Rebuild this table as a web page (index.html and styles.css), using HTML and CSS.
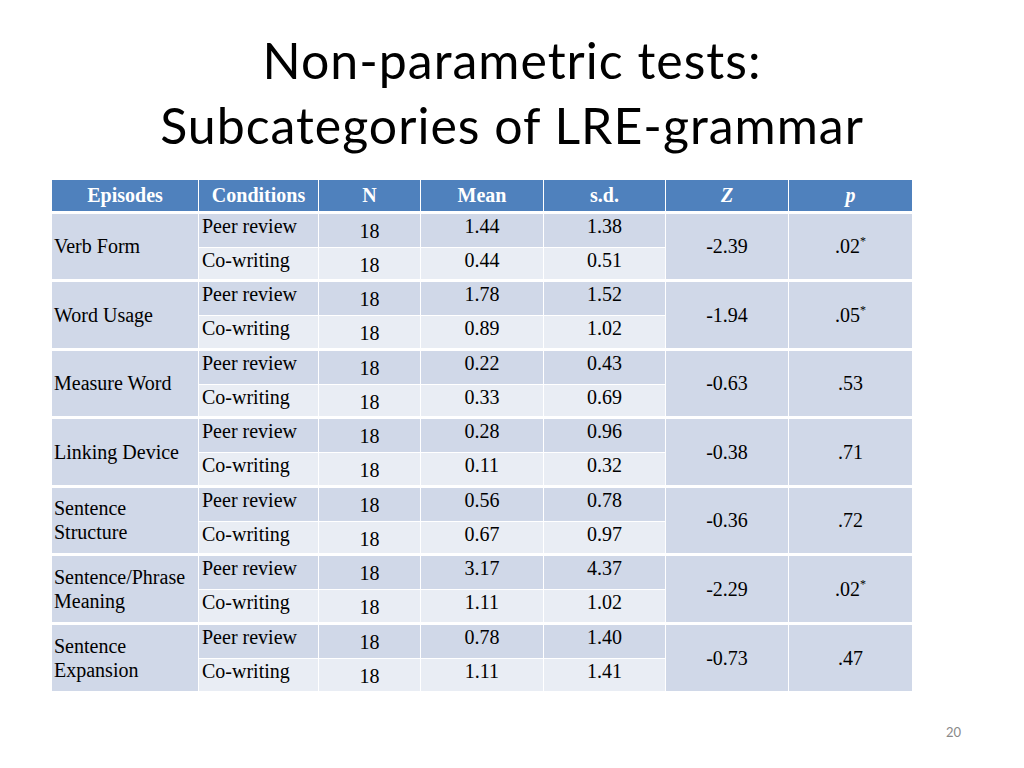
FILE: index.html
```html
<!DOCTYPE html>
<html>
<head>
<meta charset="utf-8">
<link rel="stylesheet" href="styles.css">
</head>
<body>
<div class="slide">
  <h1 class="title">Non-parametric tests:<br>Subcategories of LRE-grammar</h1>
  <table class="stats">
    <colgroup>
      <col class="c-ep"><col class="c-cond"><col class="c-n"><col class="c-mean"><col class="c-sd"><col class="c-z"><col class="c-p">
    </colgroup>
    <thead>
      <tr><th>Episodes</th><th>Conditions</th><th>N</th><th>Mean</th><th>s.d.</th><th><i>Z</i></th><th><i>p</i></th></tr>
    </thead>
    <tbody>
      <tr class="peer"><td class="ep" rowspan="2">Verb Form</td><td class="cond">Peer review</td><td class="n">18</td><td class="num">1.44</td><td class="num">1.38</td><td class="zp" rowspan="2">-2.39</td><td class="zp" rowspan="2">.02<sup>*</sup></td></tr>
      <tr class="co"><td class="cond">Co-writing</td><td class="n">18</td><td class="num">0.44</td><td class="num">0.51</td></tr>

      <tr class="peer"><td class="ep" rowspan="2">Word Usage</td><td class="cond">Peer review</td><td class="n">18</td><td class="num">1.78</td><td class="num">1.52</td><td class="zp" rowspan="2">-1.94</td><td class="zp" rowspan="2">.05<sup>*</sup></td></tr>
      <tr class="co"><td class="cond">Co-writing</td><td class="n">18</td><td class="num">0.89</td><td class="num">1.02</td></tr>

      <tr class="peer"><td class="ep" rowspan="2">Measure Word</td><td class="cond">Peer review</td><td class="n">18</td><td class="num">0.22</td><td class="num">0.43</td><td class="zp" rowspan="2">-0.63</td><td class="zp" rowspan="2">.53</td></tr>
      <tr class="co"><td class="cond">Co-writing</td><td class="n">18</td><td class="num">0.33</td><td class="num">0.69</td></tr>

      <tr class="peer"><td class="ep" rowspan="2">Linking Device</td><td class="cond">Peer review</td><td class="n">18</td><td class="num">0.28</td><td class="num">0.96</td><td class="zp" rowspan="2">-0.38</td><td class="zp" rowspan="2">.71</td></tr>
      <tr class="co"><td class="cond">Co-writing</td><td class="n">18</td><td class="num">0.11</td><td class="num">0.32</td></tr>

      <tr class="peer"><td class="ep" rowspan="2">Sentence<br>Structure</td><td class="cond">Peer review</td><td class="n">18</td><td class="num">0.56</td><td class="num">0.78</td><td class="zp" rowspan="2">-0.36</td><td class="zp" rowspan="2">.72</td></tr>
      <tr class="co"><td class="cond">Co-writing</td><td class="n">18</td><td class="num">0.67</td><td class="num">0.97</td></tr>

      <tr class="peer"><td class="ep" rowspan="2">Sentence/Phrase<br>Meaning</td><td class="cond">Peer review</td><td class="n">18</td><td class="num">3.17</td><td class="num">4.37</td><td class="zp" rowspan="2">-2.29</td><td class="zp" rowspan="2">.02<sup>*</sup></td></tr>
      <tr class="co"><td class="cond">Co-writing</td><td class="n">18</td><td class="num">1.11</td><td class="num">1.02</td></tr>

      <tr class="peer"><td class="ep" rowspan="2">Sentence<br>Expansion</td><td class="cond">Peer review</td><td class="n">18</td><td class="num">0.78</td><td class="num">1.40</td><td class="zp" rowspan="2">-0.73</td><td class="zp" rowspan="2">.47</td></tr>
      <tr class="co"><td class="cond">Co-writing</td><td class="n">18</td><td class="num">1.11</td><td class="num">1.41</td></tr>
    </tbody>
  </table>
  <div class="pagenum">20</div>
</div>
</body>
</html>
```

FILE: styles.css
```css
html, body {
  margin: 0;
  padding: 0;
  background: #ffffff;
}

.slide {
  width: 1024px;
  height: 768px;
  display: flex;
  flex-direction: column;
  align-items: flex-start;
  box-sizing: border-box;
  padding: 28px 0 0 51px;
}

.title {
  flex-shrink: 0;
  align-self: stretch;
  margin: 0 51px 22px 0;
  text-align: center;
  font-family: Lato, "Open Sans", sans-serif;
  font-weight: 400;
  font-size: 50px;
  letter-spacing: 1px;
  line-height: 65px;
  color: #000000;
}

.stats {
  flex-shrink: 0;
  border-collapse: collapse;
  table-layout: fixed;
  width: 861px;
  font-family: "Liberation Serif", "Times New Roman", serif;
  font-size: 20px;
  line-height: 24px;
  color: #000000;
}

.c-ep { width: 147px; }
.c-cond { width: 120px; }
.c-n { width: 102px; }
.c-mean { width: 123px; }
.c-sd { width: 122px; }
.c-z { width: 123px; }
.c-p { width: 124px; }

.stats thead tr {
  height: 32px;
}

.stats th {
  background: #4f81bd;
  color: #ffffff;
  font-weight: 700;
  padding: 0;
  text-align: center;
  vertical-align: middle;
  border-left: 1px solid #ffffff;
  border-right: 1px solid #ffffff;
}

.stats td {
  padding: 0;
  border: 1px solid #ffffff;
  vertical-align: middle;
}

.stats tr.peer {
  height: 35px;
}

.stats tr.co {
  height: 33.5px;
}

.stats tr.peer td {
  border-top: 3px solid #ffffff;
}

.stats tr.peer td.cond,
.stats tr.peer td.n,
.stats tr.peer td.num {
  background: #d0d8e8;
}

.stats tr.co td.cond,
.stats tr.co td.n,
.stats tr.co td.num {
  background: #e9edf4;
}

.stats td.ep {
  background: #d0d8e8;
  padding-left: 2px;
  text-align: left;
}

.stats td.zp {
  background: #d0d8e8;
  text-align: center;
}

.stats td.cond {
  padding-left: 3px;
  text-align: left;
  vertical-align: top;
}

.stats td.n {
  text-align: center;
  vertical-align: top;
  padding-top: 5px;
}

.stats td.num {
  text-align: center;
  vertical-align: top;
}

.stats sup {
  font-size: 12px;
  line-height: 0;
  vertical-align: 8px;
}

.pagenum {
  margin-top: auto;
  margin-bottom: 28px;
  align-self: flex-end;
  margin-right: 63px;
  font-family: Lato, "Open Sans", sans-serif;
  font-size: 13px;
  color: #898989;
}
```
